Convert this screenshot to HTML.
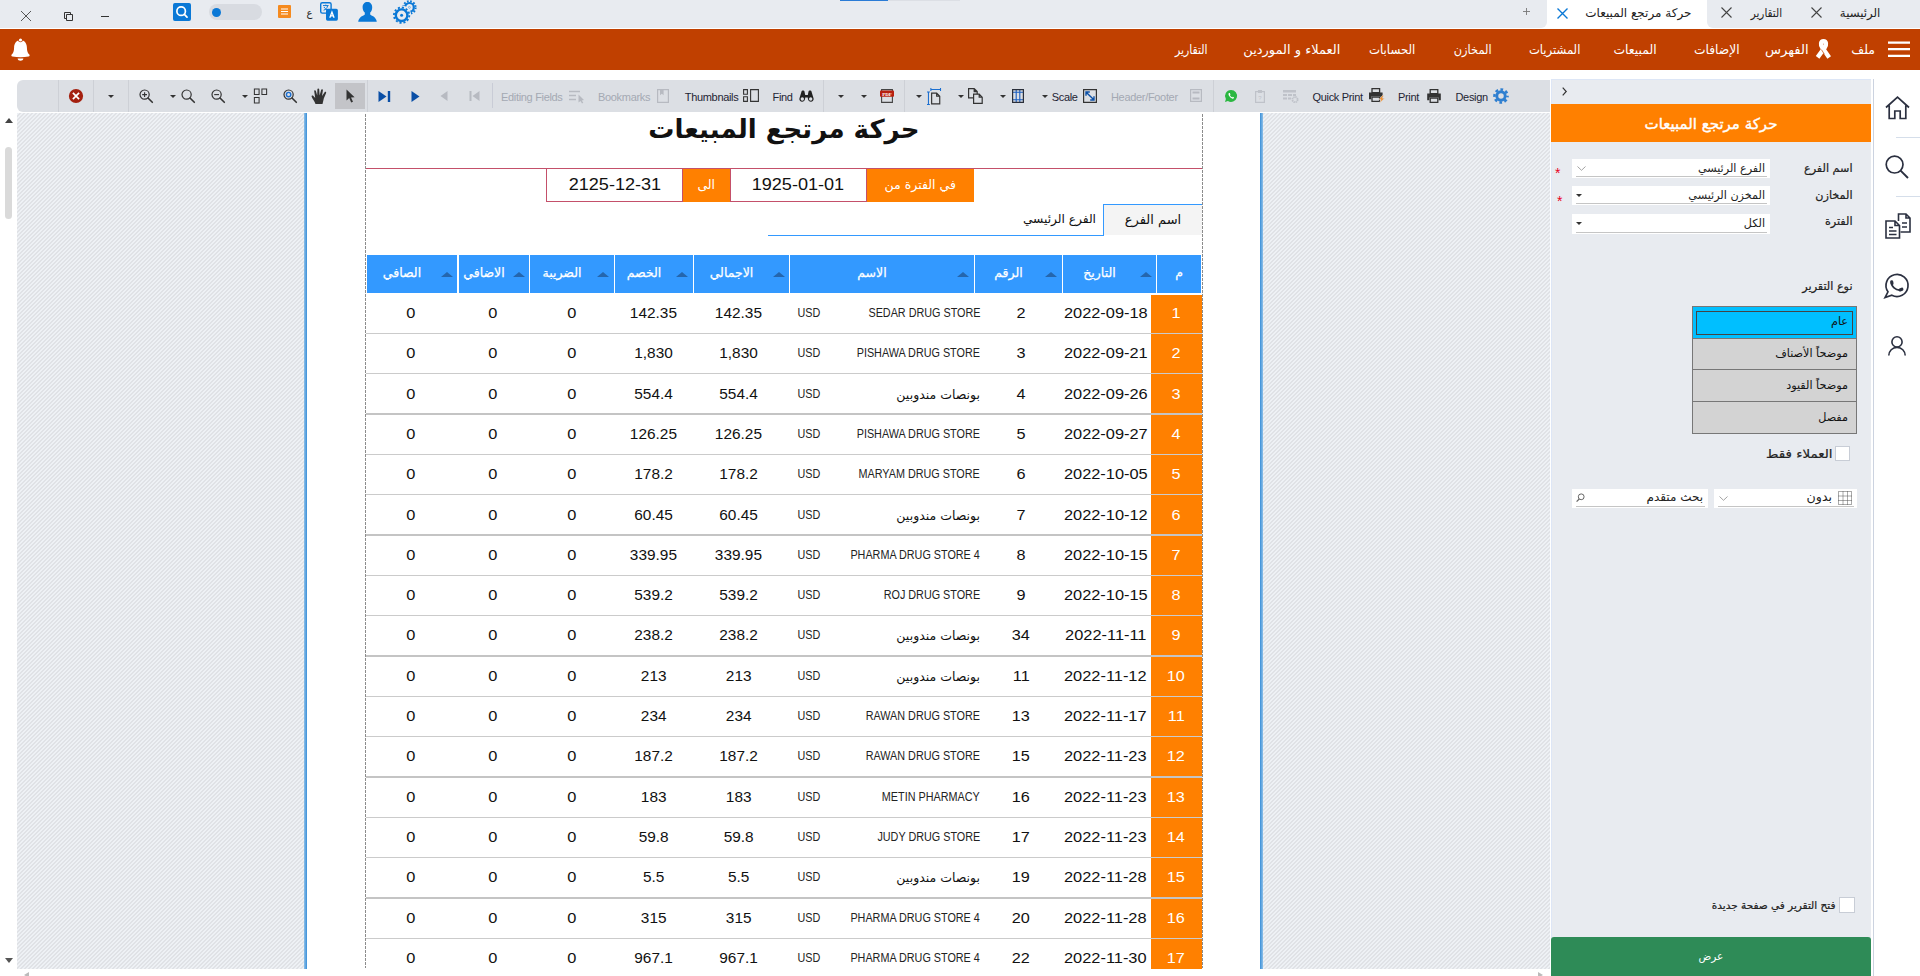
<!DOCTYPE html>
<html lang="ar">
<head>
<meta charset="utf-8">
<title>حركة مرتجع المبيعات</title>
<style>
html,body{margin:0;padding:0}
body{width:1920px;height:976px;overflow:hidden;position:relative;background:#fff;
 font-family:"Liberation Sans","DejaVu Sans",sans-serif;color:#111}
.a{position:absolute}
.ar{font-family:"DejaVu Sans","Liberation Sans",sans-serif;direction:rtl}
svg{position:absolute;overflow:visible}
/* tab bar */
#tabbar{position:absolute;left:0;top:0;width:1920px;height:29px;background:#fff}
#tabbar .g{position:absolute;top:0;height:28px;background:#e8ebf0}
#tabbar .tab{position:absolute;top:0;height:29px;font-size:12px;line-height:26px;color:#222;white-space:nowrap;transform-origin:100% 50%}
#acttab{position:absolute;left:1547px;top:0;width:160px;height:29px;background:#fff}
/* menu bar */
#menubar{position:absolute;left:0;top:29px;width:1920px;height:41px;background:#c04000}
#menubar .mi{position:absolute;top:0;height:41px;line-height:42px;font-size:12.5px;color:#fff;white-space:nowrap;transform-origin:100% 50%}
/* toolbar */
#toolbar{position:absolute;left:17px;top:80px;width:1533px;height:31.5px;background:#dcdfe4;border-radius:6px 0 0 6px}
#toolbar .sep{position:absolute;top:0;height:31.5px;width:1px;background:#cdd0d6}
#toolbar .t{position:absolute;top:0;height:32px;line-height:35px;font-size:11px;color:#1e2433;white-space:nowrap;letter-spacing:-0.32px}
#toolbar .t.dis{color:#a4a9b3}
.dd{position:absolute;width:0;height:0;border-left:3.25px solid transparent;border-right:3.25px solid transparent;border-top:3.5px solid #333}
/* preview */
#preview{position:absolute;left:17px;top:112px;width:1533px;height:856.5px;overflow:hidden;
 background:repeating-linear-gradient(135deg,#e0e2e6 0,#e0e2e6 1.4142px,#eef1f5 1.4142px,#eef1f5 2.8284px)}
#preview:before{content:"";position:absolute;left:0;top:0;width:100%;height:1px;background:#fff}
#page{position:absolute;left:288px;top:0;width:957px;height:858px;background:#fff}
#page .bl{position:absolute;top:1px;width:3px;height:857px;background:linear-gradient(90deg,#8fc0e8,#3a8fd8)}
.dash{z-index:4;position:absolute;top:2px;width:1px;height:854px;background:repeating-linear-gradient(180deg,#8c8c8c 0,#8c8c8c 3px,transparent 3px,transparent 4px)}
/* table */
.hc{-webkit-text-stroke:0.25px #fff;position:absolute;top:143px;height:38px;background:#3399ff;color:#fff;font-size:12.5px;line-height:36px;text-align:center}
.hc .tri{position:absolute;top:16.5px;width:0;height:0;border-left:6.5px solid transparent;border-right:6.5px solid transparent;border-bottom:5.5px solid #2566ad}
.row{position:absolute;left:61px;width:836px}
.row i{position:absolute;left:0;width:836px;top:100%;height:1px;background:#cbcbcb;z-index:2}
.row i.k{height:2px;background:#c4c4c4}
.row .c{position:absolute;top:0;height:100%;line-height:41px;font-size:14px;white-space:nowrap;color:#111}
.row.d1 .c{line-height:43px}
.num{display:inline-block;transform:scaleX(1.17)}
.c.idx .num,.c.no .num{transform:scaleX(1.16)}
.en{position:relative;top:-0.8px;display:inline-block;font-size:12px;transform:scaleX(.90);transform-origin:100% 50%;color:#222}
.c.idx{left:785px;width:51.3px;box-sizing:border-box;padding-right:1.6px;background:#ff8000;color:#fff !important;text-align:center;height:calc(100% - 0px)}
.c.idx .num{color:#fff}
.c.date{left:691.4px;width:96px;text-align:center}
.c.no{left:612px;width:86px;text-align:center}
.c.name{right:222px;text-align:right}
.c.name.ar{font-size:12.5px}
.c.cur{right:382px;text-align:right}
.c.tot{left:327.5px;width:90px;text-align:center}
.c.tot .num,.c.dis .num{transform:scaleX(1.1)}
.c.dis{left:242.5px;width:90px;text-align:center}
.c.tax{left:160.7px;width:90px;text-align:center}
.c.add{left:81.7px;width:90px;text-align:center}
.c.net{left:-0.3px;width:90px;text-align:center}
/* side panel */
#side{position:absolute;left:1551px;top:79px;width:320px;height:897px;background:#e8ebf0;box-shadow:inset 1px 1px 0 #dde6f6}
#side .hdr{position:absolute;left:0;top:25px;width:320px;height:38px;background:#ff8000;color:#fff;text-align:center;line-height:40px;font-size:15px;-webkit-text-stroke:0.4px #fff}
#side .lbl{-webkit-text-stroke:0.2px #222;position:absolute;font-size:11.2px;white-space:nowrap;color:#222;line-height:20px;height:20px}
#side .fld{position:absolute;background:#fff;height:19px;font-size:11.2px;line-height:20px;color:#222;text-align:right;box-sizing:border-box;padding-right:5px}
#side .fld:after{content:"";position:absolute;left:4px;right:3px;bottom:1px;height:1px;background:#c5c5c5}
.ast{position:absolute;color:#e8001c;font-size:15px;line-height:14px}
#lb{position:absolute;left:141px;top:227px;width:165px;height:128px;background:#d3d3d3;border:1px solid #777;box-sizing:border-box}
#lb .it{position:absolute;left:0;width:163px;text-align:right;padding-right:8px;box-sizing:border-box;font-size:11.2px;color:#111;border-bottom:1px solid #777}
.cb{position:absolute;width:15px;height:15px;background:#fff;border:1px solid #c8cdd6;box-sizing:border-box}
#go{position:absolute;left:0;top:858px;width:320px;height:39px;background:#2e8b57;border-radius:3px 3px 0 0;color:#fff;text-align:center;font-size:10.5px;line-height:38px}
/* right icon bar */
#ibar{position:absolute;left:1873px;top:79px;width:47px;height:897px;background:#fff;border-left:1px solid #ccd3e0;box-sizing:border-box}

</style>
</head>
<body>
<div id="tabbar">
 <div class="g" style="left:0;width:1547px;border-bottom-right-radius:6px"></div>
 <div class="g" style="left:1707px;width:213px;border-bottom-left-radius:6px"></div>
 <!-- window controls -->
 <svg style="left:20px;top:10px" width="12" height="12" viewBox="0 0 12 12"><path d="M1 1 L11 11 M11 1 L1 11" stroke="#444" stroke-width="0.9" fill="none"/></svg>
 <svg style="left:64px;top:12px" width="9" height="9" viewBox="0 0 9 9"><path d="M2.5 2.5h6v6h-6z M2.5 6.5h-2v-6h6v2" stroke="#333" stroke-width="1" fill="none"/></svg>
 <svg style="left:101px;top:15px" width="8" height="3" viewBox="0 0 8 3"><path d="M0 1.5h8" stroke="#333" stroke-width="1"/></svg>
 <!-- search square -->
 <svg style="left:173px;top:3px" width="18" height="18" viewBox="0 0 19 19"><rect x="0" y="0" width="19" height="19" rx="2" fill="#0a78d6"/><circle cx="8.6" cy="8.6" r="4.5" stroke="#fff" stroke-width="1.8" fill="none"/><path d="M12 12 L14.8 14.8" stroke="#fff" stroke-width="1.9" stroke-linecap="round"/></svg>
 <!-- toggle -->
 <div class="a" style="left:209px;top:4px;width:53px;height:16px;border-radius:8px;background:#d8dbe1"></div>
 <div class="a" style="left:212px;top:8px;width:9px;height:9px;border-radius:5px;background:#0a78d6"></div>
 <!-- note icon -->
 <svg style="left:278px;top:5px" width="13" height="13" viewBox="0 0 13 13"><rect width="13" height="13" rx="1" fill="#f58a1f"/><path d="M3 4h7M3 6.5h7M3 9h7" stroke="#fff" stroke-width="1"/></svg>
 <div class="a ar" style="left:306.5px;top:2.5px;font-size:10px;line-height:20px;color:#222">ع</div>
 <!-- translate icon -->
 <svg style="left:319px;top:1.2px" width="20" height="20" viewBox="0 0 20 20"><rect x="1.7" y="1.7" width="10.4" height="10.4" rx="1.6" fill="#e8ebf0" stroke="#0a78d6" stroke-width="1.4"/><path d="M4 4.6h5.6M6.8 3.6v1M4.6 9.2c2-0.6 3.6-2 4-4.4M5 6c0.8 1.6 2.4 2.8 4.2 3.2" stroke="#0a78d6" stroke-width="1" fill="none"/><rect x="7" y="7.8" width="11.9" height="11.9" rx="1.6" fill="#0a78d6"/><path d="M10.8 16.8 L12.95 11 L15.1 16.8 M11.6 14.9h2.7" stroke="#fff" stroke-width="1.3" fill="none"/></svg>
 <!-- user icon -->
 <svg style="left:357px;top:1px" width="21" height="22" viewBox="0 0 21 22"><path d="M10.4 1 C13.2 1 15.2 3 15.2 6.2 C15.2 8.6 14.4 10.4 13.2 11.6 L13.2 13.4 C14.2 14.6 19.2 15.4 19.8 20.8 L1.2 20.8 C1.8 15.4 6.8 14.6 7.8 13.4 L7.8 11.6 C6.6 10.4 5.6 8.6 5.6 6.2 C5.6 3 7.6 1 10.4 1 Z" fill="#0a78d6"/></svg>
 <!-- gears -->
 <svg style="left:392px;top:0px" width="26" height="25" viewBox="0 0 26 25"><g fill="none" stroke="#0a78d6"><circle cx="17.4" cy="7.4" r="4.4" stroke-width="2.2"/><circle cx="17.4" cy="7.4" r="6.2" stroke-width="2" stroke-dasharray="1.7 1.547"/><circle cx="17.4" cy="7.4" r="1" stroke-width="1" stroke="#7ab4e8"/><circle cx="9.6" cy="15.2" r="8.9" stroke="#e8ebf0" stroke-width="1.6" fill="#e8ebf0"/><circle cx="9.6" cy="15.2" r="5.8" stroke-width="2.4"/><circle cx="9.6" cy="15.2" r="7.7" stroke-width="1.8" stroke-dasharray="2.1 1.932"/><circle cx="9.6" cy="15.2" r="1.5" fill="#0a78d6" stroke="none"/></g></svg>
 <!-- top accent -->
 <div class="a" style="left:840px;top:0;width:48px;height:1px;background:#2a7bd6"></div>
 <div class="a" style="left:888px;top:0;width:72px;height:1px;background:#dcdfe5"></div>
 <!-- tabs -->
 <div id="acttab"></div>
 <div class="tab ar" style="right:40px;transform:scaleX(.98)">الرئيسية</div>
 <svg style="left:1811px;top:7px" width="11" height="11" viewBox="0 0 11 11"><path d="M0.5 0.5 L10.5 10.5 M10.5 0.5 L0.5 10.5" stroke="#444" stroke-width="1.1"/></svg>
 <div class="tab ar" style="right:138px;transform:scaleX(.87)">التقارير</div>
 <svg style="left:1721px;top:7px" width="11" height="11" viewBox="0 0 11 11"><path d="M0.5 0.5 L10.5 10.5 M10.5 0.5 L0.5 10.5" stroke="#444" stroke-width="1.1"/></svg>
 <div class="tab ar" style="right:228.5px">حركة مرتجع المبيعات</div>
 <svg style="left:1556.5px;top:7.5px" width="11" height="11" viewBox="0 0 11 11"><path d="M0.5 0.5 L10.5 10.5 M10.5 0.5 L0.5 10.5" stroke="#0a78d6" stroke-width="1.4"/></svg>
 <svg style="left:1523px;top:8px" width="7" height="7" viewBox="0 0 7 7"><path d="M3.5 0v7M0 3.5h7" stroke="#777" stroke-width="0.9"/></svg>
</div>
<div id="menubar">
 <svg style="left:1888px;top:12px" width="22" height="17" viewBox="0 0 22 17"><path d="M0 1.6h22M0 8.2h22M0 14.9h22" stroke="#fff" stroke-width="2.3"/></svg>
 <div class="mi ar" style="right:45px;transform:scaleX(1.0)">ملف</div>
 <svg style="left:1815px;top:9.5px" width="17" height="21" viewBox="0 0 17 21"><path d="M2.6 18.4 L9.8 8.4 C11.6 5.6 11.4 2.3 8.5 2.3 C5.6 2.3 5.4 5.6 7.2 8.4 L14.2 18.4" stroke="#fff" stroke-width="4.4" fill="none" stroke-linejoin="round"/><path d="M6.4 10.6 L9.4 15.2" stroke="#c04000" stroke-width="0.7"/></svg>
 <div class="mi ar" style="right:111.5px;transform:scaleX(1.05)">الفهرس</div>
 <div class="mi ar" style="right:180.5px;transform:scaleX(0.98)">الإضافات</div>
 <div class="mi ar" style="right:263px;transform:scaleX(0.99)">المبيعات</div>
 <div class="mi ar" style="right:339.5px;transform:scaleX(0.93)">المشتريات</div>
 <div class="mi ar" style="right:428px;transform:scaleX(0.91)">المخازن</div>
 <div class="mi ar" style="right:504.5px;transform:scaleX(0.94)">الحسابات</div>
 <div class="mi ar" style="right:579.5px;transform:scaleX(1.04)">العملاء و الموردين</div>
 <div class="mi ar" style="right:712.5px;transform:scaleX(0.87)">التقارير</div>
 <!-- bell -->
 <svg style="left:10.9px;top:9px" width="19" height="23" viewBox="0 0 19 23"><path d="M9.5 2.2 C14 2.2 15.9 5.8 15.9 9.6 C15.9 13.6 16.9 15.4 18.3 16.6 C19 17.4 18.6 18.3 17.6 18.5 C12 19.6 7 19.6 1.4 18.5 C0.4 18.3 0 17.4 0.7 16.6 C2.1 15.4 3.1 13.6 3.1 9.6 C3.1 5.8 5 2.2 9.5 2.2 Z M6.6 20.6 L12.4 20.6 C12.2 22 11 22.8 9.5 22.8 C8 22.8 6.8 22 6.6 20.6Z" fill="#fff"/><circle cx="9.5" cy="2" r="2.3" fill="#c04000"/><circle cx="9.5" cy="2" r="1.6" fill="#fff"/></svg>
</div>

<div id="toolbar">
<div class="sep" style="left:41px"></div>
<div class="sep" style="left:76px"></div>
<div class="sep" style="left:111px"></div>
<div class="sep" style="left:349.5px"></div>
<div class="sep" style="left:806px"></div>
<div class="sep" style="left:887px"></div>
<div class="sep" style="left:1196px"></div>
<div class="sep" style="left:475px;top:3px;height:25px;background:#c9ccd6"></div>
<svg style="left:51px;top:8px" width="16" height="16" viewBox="0 0 16 16"><circle cx="8" cy="8" r="7.1" fill="#a4200f"/><path d="M4.9 4.9 L11.1 11.1 M11.1 4.9 L4.9 11.1" stroke="#fff" stroke-width="1.7"/></svg>
<div class="dd" style="left:90.75px;top:14.5px"></div>
<svg style="left:122px;top:9px" width="14" height="14" viewBox="0 0 14 14"><circle cx="5.6" cy="5.6" r="4.6" stroke="#333" stroke-width="1.2" fill="none"/><path d="M9 9 L13.3 13.3" stroke="#333" stroke-width="1.6" stroke-linecap="round"/><path d="M3.2 5.6h4.8M5.6 3.2v4.8" stroke="#333" stroke-width="1.1"/></svg>
<div class="dd" style="left:152.5px;top:14.5px"></div>
<svg style="left:164px;top:9px" width="14" height="14" viewBox="0 0 14 14"><circle cx="5.6" cy="5.6" r="4.6" stroke="#333" stroke-width="1.2" fill="none"/><path d="M9 9 L13.3 13.3" stroke="#333" stroke-width="1.6" stroke-linecap="round"/></svg>
<svg style="left:194px;top:9px" width="14" height="14" viewBox="0 0 14 14"><circle cx="5.6" cy="5.6" r="4.6" stroke="#333" stroke-width="1.2" fill="none"/><path d="M9 9 L13.3 13.3" stroke="#333" stroke-width="1.6" stroke-linecap="round"/><path d="M3.2 5.6h4.8" stroke="#333" stroke-width="1.1"/></svg>
<div class="dd" style="left:224.5px;top:14.5px"></div>
<svg style="left:236px;top:8px" width="15" height="16" viewBox="0 0 15 17"><path d="M1 1h5v6h-5z M9 1h5v6h-5z M1 10h5v6h-5z" stroke="#333" stroke-width="1.1" fill="none"/></svg>
<svg style="left:266px;top:9px" width="14" height="14" viewBox="0 0 14 14"><circle cx="5.6" cy="5.6" r="4.6" stroke="#333" stroke-width="1.2" fill="none"/><path d="M9 9 L13.3 13.3" stroke="#333" stroke-width="1.6" stroke-linecap="round"/><circle cx="5.6" cy="5.6" r="2.2" stroke="#1b6fd0" stroke-width="1.4" fill="none"/></svg>
<svg style="left:294px;top:8px" width="19" height="16" viewBox="0 0 19 16"><path d="M4.5 16 C3.5 13 1 10.5 0.6 8.6 C0.4 7.6 1.6 7.2 2.4 8 L4.2 10 L3.2 3.2 C3 2 4.6 1.7 4.9 2.9 L6.2 7.6 L6.4 1.3 C6.4 0.1 8.1 0.1 8.2 1.3 L8.6 7.4 L10.2 1.8 C10.5 0.7 12.1 1.1 11.9 2.3 L11 8 L13.6 4.2 C14.3 3.2 15.6 4 15.1 5.1 L12.8 10.5 C12.4 12.5 12 14 11.5 16 Z" fill="#333"/></svg>
<div class="a" style="left:318px;top:3px;width:30px;height:26px;background:#c3c4c8"></div>
<svg style="left:329px;top:9px" width="9" height="14" viewBox="0 0 9 14"><path d="M0.5 0.5 L0.5 11.5 L3.2 9 L5.2 13.5 L7 12.7 L5 8.4 L8.6 8.2 Z" fill="#333"/></svg>
<svg style="left:360.5px;top:10.5px" width="13" height="11" viewBox="0 0 13 11"><path d="M0.5 0 L8.5 5.5 L0.5 11 Z" fill="#0a4fa6"/><path d="M11 0v11" stroke="#0a4fa6" stroke-width="2.4"/></svg>
<svg style="left:394px;top:10.5px" width="9" height="11" viewBox="0 0 9 11"><path d="M0.5 0 L8.5 5.5 L0.5 11 Z" fill="#0a4fa6"/></svg>
<svg style="left:423px;top:11px" width="8" height="10" viewBox="0 0 8 10"><path d="M7.5 0 L0.5 5 L7.5 10 Z" fill="#b7bac1"/></svg>
<svg style="left:451.5px;top:11px" width="11" height="10" viewBox="0 0 11 10"><path d="M10.5 0 L3.5 5 L10.5 10 Z" fill="#b7bac1"/><path d="M1.5 0v10" stroke="#b7bac1" stroke-width="2"/></svg>
<div class="t dis" style="left:484px">Editing Fields</div>
<svg style="left:551.5px;top:10px" width="16" height="13" viewBox="0 0 16 13"><path d="M0 1.5h11M0 5.5h7M0 9.5h7" stroke="#b7bac1" stroke-width="1.4"/><path d="M9.5 4.5 L9.5 12.5 L11.5 11 L13 13.5 L14.3 12.8 L12.8 10.4 L15 10 Z" fill="#b7bac1"/></svg>
<div class="t dis" style="left:581px">Bookmarks</div>
<svg style="left:640px;top:9px" width="12" height="14" viewBox="0 0 12 14"><path d="M0.6 0.6h10.8v12.8h-10.8z" stroke="#b7bac1" stroke-width="1.2" fill="none"/><path d="M3 0.6h3.6v5.6l-1.8-1.4-1.8 1.4z" fill="#b7bac1"/></svg>
<div class="t" style="left:667.75px">Thumbnails</div>
<svg style="left:726px;top:8.5px" width="16" height="13" viewBox="0 0 16 13"><path d="M0.6 0.6h3.8v4.6h-3.8z M0.6 7.8h3.8v4.6h-3.8z M7.6 0.6h7.8v11.8h-7.8z" stroke="#333" stroke-width="1.1" fill="none"/></svg>
<div class="t" style="left:755.5px">Find</div>
<svg style="left:781.5px;top:10px" width="15" height="12" viewBox="0 0 15 12"><path d="M2.6 1.2 C2.6 0.3 5.4 0.3 5.4 1.2 L6.2 5 L8.8 5 L9.6 1.2 C9.6 0.3 12.4 0.3 12.4 1.2 L14.6 8.5 C15.3 12.5 9.2 12.8 8.9 8.8 L8.8 7.4 L6.2 7.4 L6.1 8.8 C5.8 12.8 -0.3 12.5 0.4 8.5 Z" fill="#222"/><circle cx="3.3" cy="9" r="1.7" fill="#dcdfe4"/><circle cx="11.7" cy="9" r="1.7" fill="#dcdfe4"/></svg>
<div class="dd" style="left:820.75px;top:14.5px"></div>
<div class="dd" style="left:844px;top:14.5px"></div>
<svg style="left:863px;top:9px" width="14" height="14" viewBox="0 0 14 14"><path d="M1.6 0.6h10.8v12.8h-10.8z" fill="none" stroke="#444" stroke-width="1.1"/><rect x="0" y="1.6" width="14" height="6.2" rx="0.8" fill="#b8200f"/><text x="7" y="6.6" font-size="5" font-family="Liberation Serif, serif" font-weight="bold" fill="#fff" text-anchor="middle">PDF</text></svg>
<div class="dd" style="left:898.75px;top:14.5px"></div>
<svg style="left:910px;top:7.5px" width="14" height="17" viewBox="0 0 14.5 17.5"><path d="M4.8 5.2h5.2l3.2 3.2v8h-8.4z M10 5.2v3.2h3.2" stroke="#333" stroke-width="1.2" fill="none"/><path d="M1.5 4v13 M0 4h3 M0 17h3 M4 1.5h10 M4 0v3 M14 0v3" stroke="#1b6fd0" stroke-width="1.1" fill="none"/></svg>
<div class="dd" style="left:940.75px;top:14.5px"></div>
<svg style="left:951px;top:8px" width="15" height="16" viewBox="0 0 15 16"><path d="M0.6 0.6h5.6l3 3v6.2h-8.6z M6.2 0.6v3h3" stroke="#333" stroke-width="1.2" fill="#dcdfe4"/><path d="M5.6 6.2h5.6l3 3v6.2h-8.6z M11.2 6.2v3h3" stroke="#333" stroke-width="1.2" fill="#dcdfe4"/></svg>
<div class="dd" style="left:982.5px;top:14.5px"></div>
<svg style="left:995px;top:9px" width="12" height="14" viewBox="0 0 12 14"><path d="M4.2 0.6v12.8 M7.8 0.6v12.8 M0.6 3.2h10.8 M0.6 10.8h10.8" stroke="#1b5fc0" stroke-width="1.1" fill="none"/><path d="M0.6 0.6h10.8v12.8h-10.8z" stroke="#2a2f3a" stroke-width="1.2" fill="none"/></svg>
<div class="dd" style="left:1024.5px;top:14.5px"></div>
<div class="t" style="left:1034.75px">Scale</div>
<svg style="left:1066px;top:8.5px" width="14" height="14" viewBox="0 0 14 14"><path d="M0.6 0.6h12.8v12.8h-12.8z" stroke="#333" stroke-width="1.2" fill="none"/><path d="M3.2 3.2 L10.8 10.8 M3 6.8V3h3.8 M11 7.2V11h-3.8" stroke="#0a4fa6" stroke-width="1.4" fill="none"/></svg>
<div class="t dis" style="left:1094px">Header/Footer</div>
<svg style="left:1173px;top:9px" width="12" height="13" viewBox="0 0 12 13"><path d="M0.6 0.6h10.8v11.8h-10.8z" stroke="#b7bac1" stroke-width="1.2" fill="none"/><path d="M2.5 2.5h7v2h-7z M2.5 8.5h7v2h-7z" fill="#b7bac1"/></svg>
<svg style="left:1207.75px;top:9.5px" width="12" height="12" viewBox="0 0 12 12"><path d="M6 0 A6 6 0 1 1 2.9 11.1 L0 12 L0.9 9.1 A6 6 0 0 1 6 0Z" fill="#2bb741"/><path d="M4 3 C3.2 3.6 3.4 5 4.6 6.6 C5.8 8.2 7.4 9 8.4 8.6 C9 8.3 9.2 7.8 9 7.5 L7.8 6.8 L7.2 7.4 C6.4 7.2 5.2 6 4.9 5.1 L5.5 4.5 L4.8 3.1 Z" fill="#fff"/></svg>
<svg style="left:1238px;top:9.5px" width="10" height="13" viewBox="0 0 10 13"><path d="M0.6 1.6h8.8v10.8h-8.8z" stroke="#bfc2c9" stroke-width="1.2" fill="none"/><path d="M3 0h4v3h-4z" fill="#bfc2c9"/><text x="5" y="10" font-size="6" font-family="Liberation Sans, sans-serif" fill="#bfc2c9" text-anchor="middle">?</text></svg>
<svg style="left:1265.75px;top:9.5px" width="16" height="13" viewBox="0 0 16 13"><path d="M0 0h13v2.4h-13z M0 4h4v2h-4z M5 4h4v2h-4z M10 4h3v2h-3z M0 7.5h4v2h-4z M5 7.5h3v2h-3z" fill="#bfc2c9"/><circle cx="12" cy="9.6" r="2.6" stroke="#bfc2c9" stroke-width="1.8" fill="none" stroke-dasharray="1.4 0.64"/></svg>
<div class="t" style="left:1295.5px">Quick Print</div>
<svg style="left:1352px;top:8px" width="16" height="15" viewBox="0 0 16 15"><path d="M3 0.7h7.6v4h-7.6z" stroke="#333" stroke-width="1.3" fill="#dcdfe4"/><path d="M0 4.6h13.6v6.6h-2.2v-2.6h-9.2v2.6h-2.2z" fill="#333"/><path d="M3 9.2h7.6v4.2h-7.6z" stroke="#333" stroke-width="1.3" fill="#dcdfe4"/><path d="M13.4 7.6 L9.8 11.6 L12 11.6 L10.6 15 L15.6 10.2 L13.2 10.2 L14.8 7.6Z" fill="#f58a1f" stroke="#dcdfe4" stroke-width="0.6"/></svg>
<div class="t" style="left:1381px">Print</div>
<svg style="left:1410px;top:8.5px" width="14" height="14" viewBox="-0.2 0 14 14"><path d="M3 0.7h7.6v4h-7.6z" stroke="#333" stroke-width="1.3" fill="#dcdfe4"/><path d="M0 4.6h13.6v6.6h-2.2v-2.6h-9.2v2.6h-2.2z" fill="#333"/><path d="M3 9.2h7.6v4.2h-7.6z" stroke="#333" stroke-width="1.3" fill="#dcdfe4"/></svg>
<div class="t" style="left:1438.5px">Design</div>
<svg style="left:1475.75px;top:7.5px" width="16" height="16" viewBox="0 0 16 16"><circle cx="8" cy="8" r="4.2" stroke="#2f7fd0" stroke-width="2.9" fill="none"/><circle cx="8" cy="8" r="6.5" stroke="#2f7fd0" stroke-width="2.6" fill="none" stroke-dasharray="2.7 2.405" stroke-dashoffset="1.35"/></svg>
</div>
<div id="preview">
<div id="page">
<div class="bl" style="left:-1px"></div>
<div class="bl" style="left:955px;background:linear-gradient(90deg,#3a8fd8,#8fc0e8)"></div>
<div class="dash" style="left:60px"></div>
<div class="dash" style="left:897px"></div>
<div class="a ar" id="title" style="left:61px;width:836px;top:-7px;height:48px;line-height:48px;text-align:center;font-size:26.1px;font-weight:bold;color:#111">حركة مرتجع المبيعات</div>
<div class="a" style="left:61px;top:56px;width:836px;height:1px;background:#c4506a"></div>
<div class="a ar" style="left:561.5px;top:57px;width:107.5px;height:33px;background:#ff8000;color:#fff;text-align:center;line-height:31px;font-size:12.5px">في الفترة من</div>
<div class="a" style="left:425px;top:56px;width:136.5px;height:34px;border:1px solid #c4506a;box-sizing:border-box;text-align:center;line-height:32px;font-size:16px"><span class="num" style="transform:scaleX(1.13)">1925-01-01</span></div>
<div class="a ar" style="left:377.5px;top:57px;width:47.5px;height:33px;background:#ff8000;color:#fff;text-align:center;line-height:31px;font-size:12.5px">الى</div>
<div class="a" style="left:241px;top:56px;width:137px;height:34px;border:1px solid #c4506a;box-sizing:border-box;text-align:center;line-height:32px;font-size:16px"><span class="num" style="transform:scaleX(1.13)">2125-12-31</span></div>
<div class="a ar" style="left:798px;top:92px;width:99px;height:31px;background:#f4f4f4;border-top:1px solid #3399ff;border-left:1px solid #3399ff;box-sizing:border-box;text-align:center;line-height:30px;font-size:13px;color:#111">اسم الفرع</div>
<div class="a" style="left:463px;top:123px;width:336px;height:1px;background:#3399ff"></div>
<div class="a ar" style="right:166px;top:93px;height:30px;line-height:29px;font-size:12.2px;color:#111;white-space:nowrap">الفرع الرئيسي</div>
<div class="hc ar" style="left:852px;width:44px">م</div>
<div class="hc ar" style="left:758px;width:93px;padding-right:20px;box-sizing:border-box">التاريخ<i class="tri" style="right:4.5px"></i></div>
<div class="hc ar" style="left:670px;width:87px;padding-right:20px;box-sizing:border-box">الرقم<i class="tri" style="right:5px"></i></div>
<div class="hc ar" style="left:485px;width:184px;padding-right:20px;box-sizing:border-box">الاسم<i class="tri" style="right:4.7px"></i></div>
<div class="hc ar" style="left:389px;width:95px;padding-right:20px;box-sizing:border-box">الاجمالي<i class="tri" style="right:4.5px"></i></div>
<div class="hc ar" style="left:310px;width:78px;padding-right:20px;box-sizing:border-box">الخصم<i class="tri" style="right:4.7px"></i></div>
<div class="hc ar" style="left:225px;width:84px;padding-right:20px;box-sizing:border-box">الضريبة<i class="tri" style="right:5px"></i></div>
<div class="hc ar" style="left:154px;width:70px;padding-right:20px;box-sizing:border-box">الاضافي<i class="tri" style="right:4px"></i></div>
<div class="hc ar" style="left:62px;width:90px;padding-right:20px;box-sizing:border-box">الصافي<i class="tri" style="right:4px"></i></div>
<div class="a" style="left:846px;top:181px;width:51.5px;height:1.5px;background:#fff;z-index:3"></div>

<div class="row" style="top:181px;height:40px">
<div class="c idx"><span class="num">1</span></div>
<div class="c date"><span class="num">2022-09-18</span></div>
<div class="c no"><span class="num">2</span></div>
<div class="c name"><span class="en">SEDAR DRUG STORE</span></div>
<div class="c cur"><span class="en">USD</span></div>
<div class="c tot"><span class="num">142.35</span></div>
<div class="c dis"><span class="num">142.35</span></div>
<div class="c tax"><span class="num">0</span></div>
<div class="c add"><span class="num">0</span></div>
<div class="c net"><span class="num">0</span></div>
<i></i></div>
<div class="row" style="top:221px;height:40px">
<div class="c idx"><span class="num">2</span></div>
<div class="c date"><span class="num">2022-09-21</span></div>
<div class="c no"><span class="num">3</span></div>
<div class="c name"><span class="en">PISHAWA DRUG STORE</span></div>
<div class="c cur"><span class="en">USD</span></div>
<div class="c tot"><span class="num">1,830</span></div>
<div class="c dis"><span class="num">1,830</span></div>
<div class="c tax"><span class="num">0</span></div>
<div class="c add"><span class="num">0</span></div>
<div class="c net"><span class="num">0</span></div>
<i></i></div>
<div class="row d1" style="top:261px;height:40px">
<div class="c idx"><span class="num">3</span></div>
<div class="c date"><span class="num">2022-09-26</span></div>
<div class="c no"><span class="num">4</span></div>
<div class="c name ar">بونصات مندوبين</div>
<div class="c cur"><span class="en">USD</span></div>
<div class="c tot"><span class="num">554.4</span></div>
<div class="c dis"><span class="num">554.4</span></div>
<div class="c tax"><span class="num">0</span></div>
<div class="c add"><span class="num">0</span></div>
<div class="c net"><span class="num">0</span></div>
<i class="k"></i></div>
<div class="row d1" style="top:301px;height:41px">
<div class="c idx"><span class="num">4</span></div>
<div class="c date"><span class="num">2022-09-27</span></div>
<div class="c no"><span class="num">5</span></div>
<div class="c name"><span class="en">PISHAWA DRUG STORE</span></div>
<div class="c cur"><span class="en">USD</span></div>
<div class="c tot"><span class="num">126.25</span></div>
<div class="c dis"><span class="num">126.25</span></div>
<div class="c tax"><span class="num">0</span></div>
<div class="c add"><span class="num">0</span></div>
<div class="c net"><span class="num">0</span></div>
<i></i></div>
<div class="row" style="top:342px;height:40px">
<div class="c idx"><span class="num">5</span></div>
<div class="c date"><span class="num">2022-10-05</span></div>
<div class="c no"><span class="num">6</span></div>
<div class="c name"><span class="en">MARYAM DRUG STORE</span></div>
<div class="c cur"><span class="en">USD</span></div>
<div class="c tot"><span class="num">178.2</span></div>
<div class="c dis"><span class="num">178.2</span></div>
<div class="c tax"><span class="num">0</span></div>
<div class="c add"><span class="num">0</span></div>
<div class="c net"><span class="num">0</span></div>
<i></i></div>
<div class="row d1" style="top:382px;height:40px">
<div class="c idx"><span class="num">6</span></div>
<div class="c date"><span class="num">2022-10-12</span></div>
<div class="c no"><span class="num">7</span></div>
<div class="c name ar">بونصات مندوبين</div>
<div class="c cur"><span class="en">USD</span></div>
<div class="c tot"><span class="num">60.45</span></div>
<div class="c dis"><span class="num">60.45</span></div>
<div class="c tax"><span class="num">0</span></div>
<div class="c add"><span class="num">0</span></div>
<div class="c net"><span class="num">0</span></div>
<i class="k"></i></div>
<div class="row d1" style="top:422px;height:41px">
<div class="c idx"><span class="num">7</span></div>
<div class="c date"><span class="num">2022-10-15</span></div>
<div class="c no"><span class="num">8</span></div>
<div class="c name"><span class="en">PHARMA DRUG STORE 4</span></div>
<div class="c cur"><span class="en">USD</span></div>
<div class="c tot"><span class="num">339.95</span></div>
<div class="c dis"><span class="num">339.95</span></div>
<div class="c tax"><span class="num">0</span></div>
<div class="c add"><span class="num">0</span></div>
<div class="c net"><span class="num">0</span></div>
<i></i></div>
<div class="row" style="top:463px;height:40px">
<div class="c idx"><span class="num">8</span></div>
<div class="c date"><span class="num">2022-10-15</span></div>
<div class="c no"><span class="num">9</span></div>
<div class="c name"><span class="en">ROJ DRUG STORE</span></div>
<div class="c cur"><span class="en">USD</span></div>
<div class="c tot"><span class="num">539.2</span></div>
<div class="c dis"><span class="num">539.2</span></div>
<div class="c tax"><span class="num">0</span></div>
<div class="c add"><span class="num">0</span></div>
<div class="c net"><span class="num">0</span></div>
<i></i></div>
<div class="row" style="top:503px;height:40px">
<div class="c idx"><span class="num">9</span></div>
<div class="c date"><span class="num">2022-11-11</span></div>
<div class="c no"><span class="num">34</span></div>
<div class="c name ar">بونصات مندوبين</div>
<div class="c cur"><span class="en">USD</span></div>
<div class="c tot"><span class="num">238.2</span></div>
<div class="c dis"><span class="num">238.2</span></div>
<div class="c tax"><span class="num">0</span></div>
<div class="c add"><span class="num">0</span></div>
<div class="c net"><span class="num">0</span></div>
<i class="k"></i></div>
<div class="row d1" style="top:543px;height:41px">
<div class="c idx"><span class="num">10</span></div>
<div class="c date"><span class="num">2022-11-12</span></div>
<div class="c no"><span class="num">11</span></div>
<div class="c name ar">بونصات مندوبين</div>
<div class="c cur"><span class="en">USD</span></div>
<div class="c tot"><span class="num">213</span></div>
<div class="c dis"><span class="num">213</span></div>
<div class="c tax"><span class="num">0</span></div>
<div class="c add"><span class="num">0</span></div>
<div class="c net"><span class="num">0</span></div>
<i></i></div>
<div class="row" style="top:584px;height:40px">
<div class="c idx"><span class="num">11</span></div>
<div class="c date"><span class="num">2022-11-17</span></div>
<div class="c no"><span class="num">13</span></div>
<div class="c name"><span class="en">RAWAN DRUG STORE</span></div>
<div class="c cur"><span class="en">USD</span></div>
<div class="c tot"><span class="num">234</span></div>
<div class="c dis"><span class="num">234</span></div>
<div class="c tax"><span class="num">0</span></div>
<div class="c add"><span class="num">0</span></div>
<div class="c net"><span class="num">0</span></div>
<i></i></div>
<div class="row" style="top:624px;height:40px">
<div class="c idx"><span class="num">12</span></div>
<div class="c date"><span class="num">2022-11-23</span></div>
<div class="c no"><span class="num">15</span></div>
<div class="c name"><span class="en">RAWAN DRUG STORE</span></div>
<div class="c cur"><span class="en">USD</span></div>
<div class="c tot"><span class="num">187.2</span></div>
<div class="c dis"><span class="num">187.2</span></div>
<div class="c tax"><span class="num">0</span></div>
<div class="c add"><span class="num">0</span></div>
<div class="c net"><span class="num">0</span></div>
<i class="k"></i></div>
<div class="row d1" style="top:664px;height:41px">
<div class="c idx"><span class="num">13</span></div>
<div class="c date"><span class="num">2022-11-23</span></div>
<div class="c no"><span class="num">16</span></div>
<div class="c name"><span class="en">METIN PHARMACY</span></div>
<div class="c cur"><span class="en">USD</span></div>
<div class="c tot"><span class="num">183</span></div>
<div class="c dis"><span class="num">183</span></div>
<div class="c tax"><span class="num">0</span></div>
<div class="c add"><span class="num">0</span></div>
<div class="c net"><span class="num">0</span></div>
<i></i></div>
<div class="row" style="top:705px;height:40px">
<div class="c idx"><span class="num">14</span></div>
<div class="c date"><span class="num">2022-11-23</span></div>
<div class="c no"><span class="num">17</span></div>
<div class="c name"><span class="en">JUDY DRUG STORE</span></div>
<div class="c cur"><span class="en">USD</span></div>
<div class="c tot"><span class="num">59.8</span></div>
<div class="c dis"><span class="num">59.8</span></div>
<div class="c tax"><span class="num">0</span></div>
<div class="c add"><span class="num">0</span></div>
<div class="c net"><span class="num">0</span></div>
<i></i></div>
<div class="row" style="top:745px;height:40px">
<div class="c idx"><span class="num">15</span></div>
<div class="c date"><span class="num">2022-11-28</span></div>
<div class="c no"><span class="num">19</span></div>
<div class="c name ar">بونصات مندوبين</div>
<div class="c cur"><span class="en">USD</span></div>
<div class="c tot"><span class="num">5.5</span></div>
<div class="c dis"><span class="num">5.5</span></div>
<div class="c tax"><span class="num">0</span></div>
<div class="c add"><span class="num">0</span></div>
<div class="c net"><span class="num">0</span></div>
<i class="k"></i></div>
<div class="row d1" style="top:785px;height:41px">
<div class="c idx"><span class="num">16</span></div>
<div class="c date"><span class="num">2022-11-28</span></div>
<div class="c no"><span class="num">20</span></div>
<div class="c name"><span class="en">PHARMA DRUG STORE 4</span></div>
<div class="c cur"><span class="en">USD</span></div>
<div class="c tot"><span class="num">315</span></div>
<div class="c dis"><span class="num">315</span></div>
<div class="c tax"><span class="num">0</span></div>
<div class="c add"><span class="num">0</span></div>
<div class="c net"><span class="num">0</span></div>
<i></i></div>
<div class="row" style="top:826px;height:40px">
<div class="c idx"><span class="num">17</span></div>
<div class="c date"><span class="num">2022-11-30</span></div>
<div class="c no"><span class="num">22</span></div>
<div class="c name"><span class="en">PHARMA DRUG STORE 4</span></div>
<div class="c cur"><span class="en">USD</span></div>
<div class="c tot"><span class="num">967.1</span></div>
<div class="c dis"><span class="num">967.1</span></div>
<div class="c tax"><span class="num">0</span></div>
<div class="c add"><span class="num">0</span></div>
<div class="c net"><span class="num">0</span></div>
<i></i></div>
</div>
</div>
<!-- left scrollbar -->
<div class="a" style="left:5px;top:147px;width:7px;height:72px;border-radius:4px;background:#dadada"></div>
<div class="a" style="left:4.5px;top:118px;width:0;height:0;border-left:4px solid transparent;border-right:4px solid transparent;border-bottom:5.5px solid #444"></div>
<div class="a" style="left:4.5px;top:957.5px;width:0;height:0;border-left:4px solid transparent;border-right:4px solid transparent;border-top:5.5px solid #555"></div>
<div class="a" style="left:24px;top:972px;width:0;height:0;border-top:3.5px solid transparent;border-bottom:3.5px solid transparent;border-right:5px solid #bbb"></div>
<div class="a" style="left:1538px;top:972px;width:0;height:0;border-top:3.5px solid transparent;border-bottom:3.5px solid transparent;border-left:5px solid #bbb"></div>
<div id="side">
 <svg style="left:11px;top:8px" width="5" height="9" viewBox="0 0 5 9"><path d="M0.7 0.7 L4.2 4.5 L0.7 8.3" stroke="#333" stroke-width="1.2" fill="none"/></svg>
 <div class="hdr ar">حركة مرتجع المبيعات</div>

 <div class="lbl ar" style="right:18.5px;top:79.5px">اسم الفرع</div>
 <div class="fld ar" style="left:21px;top:80px;width:198px">الفرع الرئيسي</div>
 <svg style="left:26px;top:87px" width="9" height="5" viewBox="0 0 9 5"><path d="M0.5 0.5 L4.5 4.3 L8.5 0.5" stroke="#999" stroke-width="0.9" fill="none"/></svg>
 <div class="ast" style="left:4px;top:87px;font-size:14px">*</div>

 <div class="lbl ar" style="right:18.5px;top:107px">المخازن</div>
 <div class="fld ar" style="left:21px;top:107px;width:198px">المخزن الرئيسي</div>
 <div class="dd" style="left:25px;top:115px;border-top-color:#333;border-left-width:3px;border-right-width:3px;border-top-width:3.5px"></div>
 <div class="ast" style="left:6px;top:114.5px;font-size:14px">*</div>

 <div class="lbl ar" style="right:18.5px;top:133px">الفترة</div>
 <div class="fld ar" style="left:21px;top:135px;width:198px;height:19.5px">الكل</div>
 <div class="dd" style="left:25px;top:143px;border-top-color:#333;border-left-width:3px;border-right-width:3px;border-top-width:3.5px"></div>

 <div class="lbl ar" style="right:18.5px;top:198px">نوع التقرير</div>
 <div id="lb" class="ar">
  <div class="it" style="top:0;height:32px;line-height:30px;background:#00bfff">عام</div>
  <div class="a" style="left:3px;top:3.5px;width:157px;height:24px;border:1px solid #444;box-sizing:border-box"></div>
  <div class="it" style="top:32px;height:31px;line-height:30px">موضحاً الأصناف</div>
  <div class="it" style="top:63px;height:32px;line-height:31px">موضحاً القيود</div>
  <div class="it" style="top:95px;height:31px;line-height:31px;border-bottom:0">مفصل</div>
 </div>

 <div class="cb" style="left:284px;top:367px"></div>
 <div class="lbl ar" style="right:39px;top:365px;font-size:12.2px;transform:scaleX(1.1);transform-origin:100% 50%">العملاء فقط</div>

 <div class="fld ar" style="left:163px;top:409.5px;width:143px;padding-right:25px;font-size:12.6px;line-height:16px">بدون</div>
 <svg style="left:287px;top:412px" width="14" height="14" viewBox="0 0 14 14"><path d="M0.5 0.5h13v13h-13z M0.5 5h13 M0.5 9.5h13 M5 0.5v13 M9.5 0.5v13" stroke="#555" stroke-width="1" stroke-dasharray="1 1" fill="none"/></svg>
 <svg style="left:168px;top:417px" width="9" height="5" viewBox="0 0 9 5"><path d="M0.5 0.5 L4.5 4.3 L8.5 0.5" stroke="#999" stroke-width="0.9" fill="none"/></svg>
 <div class="fld ar" style="left:21px;top:409.5px;width:136px;font-size:12px;line-height:16.5px">بحث متقدم</div>
 <svg style="left:25px;top:414px" width="9" height="9" viewBox="0 0 9 9"><circle cx="5.2" cy="3.8" r="2.9" stroke="#666" stroke-width="1" fill="none"/><path d="M3.2 6 L0.6 8.6" stroke="#666" stroke-width="1.2"/></svg>

 <div class="cb" style="left:288px;top:818px;width:16px;height:16px"></div>
 <div class="lbl ar" style="right:35.5px;top:816px;font-size:10.5px">فتح التقرير في صفحة جديدة</div>
 <div id="go" class="ar">عرض</div>
</div>
<div id="ibar">
 <div class="a" style="left:22px;top:57.5px;width:26px;height:1px;background:#d5deea"></div>
 <div class="a" style="left:22px;top:116.5px;width:26px;height:1px;background:#d5deea"></div>
 <!-- home -->
 <svg style="left:11.3px;top:17px" width="25" height="24" viewBox="0 0 25 24"><path d="M1 11.5 L12.5 1.2 L24 11.5 M4.2 9.5 V22.5 H9.8 V15 H15.2 V22.5 H20.8 V9.5" stroke="#2b3040" stroke-width="1.7" fill="none" stroke-linejoin="miter"/></svg>
 <!-- search -->
 <svg style="left:11.3px;top:76px" width="24" height="24" viewBox="0 0 24 24"><circle cx="9.6" cy="9.6" r="8.4" stroke="#2b3040" stroke-width="1.7" fill="none"/><path d="M15.6 15.6 L23 23" stroke="#2b3040" stroke-width="1.9"/></svg>
 <!-- docs -->
 <svg style="left:11px;top:134px" width="26" height="26" viewBox="0 0 26 26"><path d="M13.5 8 V1 H21 L25 5 V19 H15.5 M21 1 V5 H25 M17 10h5 M17 14h5" stroke="#2b3040" stroke-width="1.6" fill="none"/><path d="M1 8 H10 L14.5 12.5 V25 H1 Z M10 8 V12.5 H14.5 M4 14.5h4 M4 18h7.5 M4 21.5h7.5" stroke="#2b3040" stroke-width="1.6" fill="none"/></svg>
 <!-- whatsapp -->
 <svg style="left:9.8px;top:193.6px" width="26" height="26" viewBox="0 0 25 25"><path d="M3.82 18.08 A10.6 10.6 0 1 1 7.52 21.36 L1 23.6 Z" stroke="#2b3040" stroke-width="1.6" fill="none" stroke-linejoin="miter"/><path d="M7.3 8.8 C6.8 12.6 11 17.4 16.9 16.2" stroke="#2b3040" stroke-width="1.7" fill="none" stroke-linecap="round"/><path d="M7.4 8.4 L7.7 10.2 M15.4 16.3 L17.2 15.6" stroke="#2b3040" stroke-width="3" fill="none" stroke-linecap="round"/></svg>
 <!-- user -->
 <svg style="left:13px;top:256px" width="20" height="22" viewBox="0 0 20 22"><circle cx="10" cy="6.9" r="5.1" stroke="#2b3040" stroke-width="1.6" fill="none"/><path d="M1.8 20.6 A8.2 8.2 0 0 1 18.2 20.6" stroke="#2b3040" stroke-width="1.6" fill="none"/></svg>
</div>

</body>
</html>
